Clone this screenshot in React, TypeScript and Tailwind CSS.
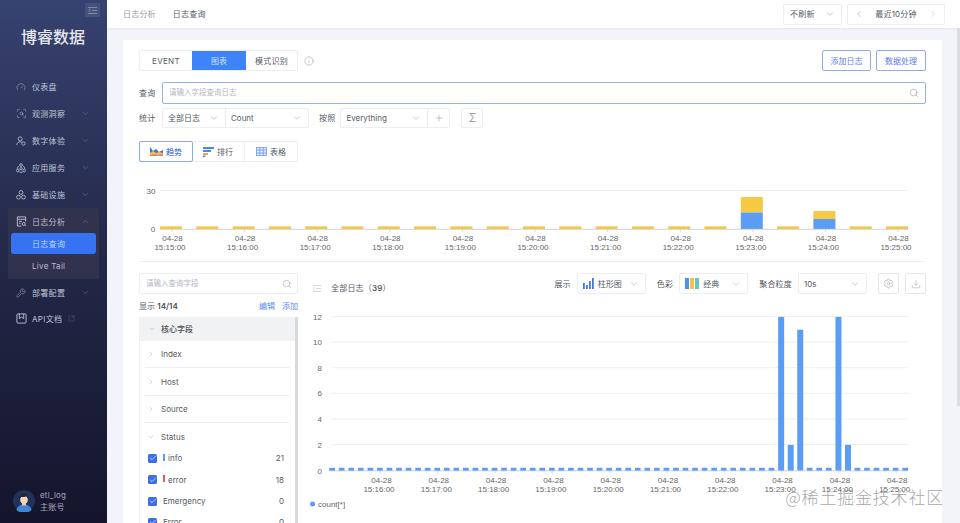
import { ChevronDown, ChevronLeft, ChevronRight, ChevronUp, Search, Info, Plus, Settings, Download, Gauge, ScanSearch, Wrench, SquareArrowOutUpRight, Check } from "lucide-react";

const FONT = { fontFamily: '"Inter", "Noto Sans CJK SC", sans-serif' };
const BLUE = "#5b9cf5";
const YELLOW = "#f6c944";

const topHours = ["15:15:00", "15:16:00", "15:17:00", "15:18:00", "15:19:00", "15:20:00", "15:21:00", "15:22:00", "15:23:00", "15:24:00", "15:25:00"];
const bottomHours = topHours.slice(1);
const spikes: Record<number, number> = { 47: 12, 48: 2, 49: 11, 53: 12, 54: 2 };

function UsersIcon() {
  return (
    <svg width="10" height="10" viewBox="0 0 12 12" fill="none" stroke="currentColor" strokeWidth="1">
      <circle cx="5" cy="3.4" r="2.4" />
      <path d="M1 11c0-2.6 1.6-4 4-4 1 0 1.8.2 2.4.7" />
      <circle cx="9" cy="9" r="2" />
    </svg>
  );
}

function NetworkIcon() {
  return (
    <svg width="10" height="10" viewBox="0 0 12 12" fill="none" stroke="currentColor" strokeWidth="1">
      <circle cx="6" cy="2.4" r="1.6" />
      <circle cx="2.2" cy="9" r="1.6" />
      <circle cx="9.8" cy="9" r="1.6" />
      <circle cx="6" cy="6.8" r="1.4" />
      <path d="M3.6 3.4A5 5 0 0 0 1.4 7M8.4 3.4A5 5 0 0 1 10.6 7M4 10.8a5 5 0 0 0 4 0" />
    </svg>
  );
}

function ClusterIcon() {
  return (
    <svg width="10" height="10" viewBox="0 0 12 12" fill="none" stroke="currentColor" strokeWidth="1">
      <circle cx="6" cy="3" r="2.3" />
      <circle cx="3" cy="8.6" r="2.3" />
      <circle cx="9" cy="8.6" r="2.3" />
    </svg>
  );
}

function LogIcon() {
  return (
    <svg width="11" height="11" viewBox="0 0 12 12" fill="none" stroke="currentColor" strokeWidth="1">
      <path d="M6 11H1.5V1h9v5" />
      <path d="M1.5 3.6h9M3.4 6h3M3.4 8h1.6" />
      <circle cx="8.4" cy="8.6" r="1.6" />
      <path d="M9.6 9.8l1.2 1.2" />
    </svg>
  );
}

function BookIcon() {
  return (
    <svg width="11" height="11" viewBox="0 0 12 12" fill="none" stroke="currentColor" strokeWidth="1">
      <path d="M2 1h8a1 1 0 0 1 1 1v8a1 1 0 0 1-1 1H2a1 1 0 0 1-1-1V2a1 1 0 0 1 1-1z" />
      <path d="M3.6 1v5l2.4-1.4L8.4 6V1" />
    </svg>
  );
}

function Avatar() {
  return (
    <svg width="22" height="22" viewBox="0 0 22 22">
      <circle cx="11" cy="11" r="11" fill="#22305a" />
      <path d="M3.5 20c1-4 4-5.500 7.500-5.500s6.500 1.500 7.500 5.500a11 11 0 0 1-15 0z" fill="#3f86d6" />
      <rect x="9" y="11" width="4" height="4.500" fill="#e8c4a4" />
      <ellipse cx="11" cy="9.500" rx="3.800" ry="4.300" fill="#f3d6b8" />
      <path d="M6.800 9c-.4-4 2-5.500 4.400-5.500S15.600 5 15.200 9c-.8-1.600-1.600-2.300-2.200-2.600-1.600.8-4.200.8-4.800.6-.6.6-1 1.200-1.400 2z" fill="#27262b" />
    </svg>
  );
}

function NavItem({ icon, label, chevron, external }: { icon: React.ReactNode; label: string; chevron?: "down" | "up"; external?: boolean }) {
  return (
    <div className="flex h-[27px] items-center pl-[16px] pr-[17px] text-[#bfc3d4]">
      <span className="flex w-[16px] shrink-0 items-center">{icon}</span>
      <span className="text-[8px] tracking-[0.3px] whitespace-nowrap">{label}</span>
      {external && <SquareArrowOutUpRight size={7} strokeWidth={1} className="ml-[6px] text-[#7d82a0]" />}
      {chevron === "down" && <ChevronDown size={9} strokeWidth={1.2} className="ml-auto text-[#7d82a0]" />}
      {chevron === "up" && <ChevronUp size={9} strokeWidth={1.2} className="ml-auto text-[#7d82a0]" />}
    </div>
  );
}

function Sidebar() {
  return (
    <aside className="relative flex h-full w-[107px] shrink-0 flex-col bg-gradient-to-b from-[#364270] via-[#232848] to-[#14152c]">
      <div className="absolute top-[3px] left-[85px] flex h-[14px] w-[15px] items-center justify-center rounded-[1px] bg-[#47527c]">
        <svg width="9" height="7" viewBox="0 0 9 7" stroke="#98a0bd" strokeWidth="0.7">
          <path d="M0 .5h9M4 3.500h5M0 6.500h9M2.500 2.300L.8 3.500l1.700 1.200" fill="none" />
        </svg>
      </div>
      <div className="mt-[26px] pl-[21px] text-[16px] leading-[22px] font-medium text-[#e6e8ef]">博睿数据</div>
      <nav className="mt-[25px] flex flex-col">
        <NavItem icon={<Gauge size={10} strokeWidth={1.1} />} label="仪表盘" />
        <NavItem icon={<ScanSearch size={11} strokeWidth={1.1} />} label="观测洞察" chevron="down" />
        <NavItem icon={<UsersIcon />} label="数字体验" chevron="down" />
        <NavItem icon={<NetworkIcon />} label="应用服务" chevron="down" />
        <NavItem icon={<ClusterIcon />} label="基础设施" chevron="down" />
        <div className="mx-[8px] flex h-[71px] flex-col bg-[#30324e]">
          <div className="-mx-[8px]">
            <NavItem icon={<LogIcon />} label="日志分析" chevron="up" />
          </div>
          <div className="mx-[3px] -mt-[2px] flex h-[21px] items-center rounded-[3px] bg-[#3673f2] pl-[21px] text-[8px] tracking-[0.3px] text-[#bcd2fb]">日志查询</div>
          <div className="flex h-[23px] items-center pl-[24px] text-[8px] tracking-[0.3px] text-[#b9bdcf]">Live Tail</div>
        </div>
        <NavItem icon={<Wrench size={10} strokeWidth={1.1} />} label="部署配置" chevron="down" />
        <div className="-mt-[1px]">
          <NavItem icon={<BookIcon />} label="API文档" external />
        </div>
      </nav>
      <div className="mt-auto mb-[10px] flex items-center gap-[5px] pl-[13px]">
        <Avatar />
        <div className="flex flex-col text-[8px] leading-[12px] tracking-[0.2px] text-[#a4a8bd]">
          <span>etl_log</span>
          <span>主账号</span>
        </div>
      </div>
    </aside>
  );
}

function Select({ label, width, icon, className = "" }: { label: string; width: string; icon?: React.ReactNode; className?: string }) {
  return (
    <div className={`flex h-full items-center justify-between border-[#e8eaee] pr-[6px] pl-[5px] text-[8px] text-[#555a64] ${width} ${className}`}>
      <span className="flex items-center gap-[4px] whitespace-nowrap">
        {icon}
        {label}
      </span>
      <ChevronDown size={10} strokeWidth={1.1} className="text-[#8b8f97]" />
    </div>
  );
}

function TrendIcon() {
  return (
    <svg width="13" height="9" viewBox="0 0 13 9">
      <path d="M0 0v9h13V3L9 5 6 2 3 4z" fill="#3f6fd8" />
      <path d="M0 6l3-2 3 2 3-1 4 1v3H0z" fill="#f2c04f" />
      <path d="M0 8l4-1 4 1 5-1v2H0z" fill="#e77e66" />
    </svg>
  );
}

function RankIcon() {
  return (
    <svg width="11" height="10" viewBox="0 0 11 10">
      <rect x="0" y="0" width="11" height="2" fill="#4a86ee" />
      <rect x="0" y="3" width="8" height="2" fill="#4a86ee" />
      <rect x="0" y="6" width="5" height="2" fill="#f0a14a" />
      <rect x="0" y="8.500" width="2.500" height="1.500" fill="#4a86ee" />
    </svg>
  );
}

function TableIcon() {
  return (
    <svg width="11" height="9" viewBox="0 0 11 9" fill="none" stroke="#6f9be8" strokeWidth="0.8">
      <rect x="0.400" y="0.400" width="10.200" height="8.200" fill="#e4ecfa" />
      <path d="M0 3h11M0 6h11M3.800 0v9M7.300 0v9" />
    </svg>
  );
}

function BarsIcon() {
  return (
    <svg width="11" height="11" viewBox="0 0 11 11" fill="#3f78e6">
      <rect x="0" y="5" width="1.800" height="6" />
      <rect x="3" y="7" width="1.800" height="4" />
      <rect x="6" y="3" width="1.800" height="8" />
      <rect x="9" y="0" width="1.800" height="11" />
    </svg>
  );
}

function PaletteIcon() {
  return (
    <svg width="14" height="11" viewBox="0 0 14 11">
      <rect x="0" y="0" width="4" height="11" fill="#4f8fee" />
      <rect x="5" y="0" width="4" height="11" fill="#f3c244" />
      <rect x="10" y="0" width="4" height="11" fill="#62c8c4" />
    </svg>
  );
}

function TopChart() {
  return (
    <svg viewBox="139 180 787 78" className="mt-[18px] block h-[78px] w-[787px]" style={{ fontFamily: '"Liberation Sans", sans-serif' }}>
      <line x1="160" y1="190.500" x2="908" y2="190.500" stroke="#f0f0f2" />
      <text x="151" y="193.500" textAnchor="middle" fontSize="8" fill="#666">30</text>
      <text x="153" y="232" textAnchor="middle" fontSize="8" fill="#666">0</text>
      {Array.from({ length: 21 }, (_, i) => {
        const x = 160 + i * 36.3;
        if (i === 16)
          return (
            <g key={i}>
              <rect x={x} y="197" width="22" height="15.500" fill={YELLOW} />
              <rect x={x} y="212.500" width="22" height="16.500" fill={BLUE} />
            </g>
          );
        if (i === 18)
          return (
            <g key={i}>
              <rect x={x} y="211" width="22" height="8" fill={YELLOW} />
              <rect x={x} y="219" width="22" height="10" fill={BLUE} />
            </g>
          );
        return <rect key={i} x={x} y="226.300" width="22" height="2.700" fill={YELLOW} />;
      })}
      <line x1="160" y1="229.300" x2="908" y2="229.300" stroke="#c4c6ca" strokeWidth="0.8" />
      {topHours.map((h, i) => (
        <g key={h} fontSize="8" fill="#666" textAnchor="middle">
          <line x1={172 + i * 72.6} y1="229.500" x2={172 + i * 72.6} y2="232" stroke="#c4c6ca" strokeWidth="0.6" />
          <text x={172.500 + i * 72.6} y="241">04-28</text>
          <text x={170 + i * 72.6} y="250">{h}</text>
        </g>
      ))}
    </svg>
  );
}

function BottomChart() {
  return (
    <svg viewBox="300 305 626 218" className="block h-[218px] w-[626px]" style={{ fontFamily: '"Liberation Sans", sans-serif' }}>
      {[12, 10, 8, 6, 4, 2].map((v, i) => (
        <g key={v}>
          <line x1="331" y1={316.500 + i * 25.6} x2="908" y2={316.500 + i * 25.6} stroke="#f0f0f2" />
          <text x="322" y={319.500 + i * 25.6} textAnchor="end" fontSize="8" fill="#666">{v}</text>
        </g>
      ))}
      <text x="322" y="473.500" textAnchor="end" fontSize="8" fill="#666">0</text>
      <line x1="329" y1="470.800" x2="908" y2="470.800" stroke="#c4c6ca" strokeWidth="0.8" />
      {Array.from({ length: 61 }, (_, i) => {
        const x = 329.300 + i * 9.55;
        const v = spikes[i];
        if (v) return <rect key={i} x={x} y={470.500 - v * 12.8} width="6" height={v * 12.8} fill={BLUE} />;
        return <rect key={i} x={x} y="467.800" width="5.700" height="2.800" fill={BLUE} />;
      })}
      {bottomHours.map((h, i) => (
        <g key={h} fontSize="8" fill="#666" textAnchor="middle">
          <line x1={380.500 + i * 57.3} y1="471" x2={380.500 + i * 57.3} y2="473.500" stroke="#c4c6ca" strokeWidth="0.6" />
          <text x={381.500 + i * 57.3} y="483">04-28</text>
          <text x={379 + i * 57.3} y="491.500">{h}</text>
        </g>
      ))}
      <circle cx="312.500" cy="504" r="2.500" fill={BLUE} />
      <text x="318" y="506.500" fontSize="8" fill="#666">count[*]</text>
    </svg>
  );
}

function FieldRow({ label, open }: { label: string; open?: boolean }) {
  return (
    <div className={`mx-[5px] flex h-[27.400px] items-center pl-[2px] text-[8px] text-[#555a64] ${open ? "-mb-[3px]" : "border-b border-[#eeeff2]"}`}>
      {open ? <ChevronDown size={8} strokeWidth={1.1} className="mr-[6px] text-[#8b8f97]" /> : <ChevronRight size={8} strokeWidth={1.1} className="mr-[6px] text-[#8b8f97]" />}
      {label}
    </div>
  );
}

function CheckRow({ label, count, tick }: { label: string; count: number; tick?: string }) {
  return (
    <div className="mx-[3px] flex h-[21.400px] items-center pr-[8px] pl-[5px] text-[8px] text-[#555a64]">
      <span className="mr-[6px] flex h-[9px] w-[9px] items-center justify-center rounded-[1.500px] bg-[#3a6fe8]">
        <Check size={8} strokeWidth={2} className="text-white" />
      </span>
      {tick && <span className={`mr-[3px] -mt-[2px] h-[7px] w-[2px] ${tick}`} />}
      <span>{label}</span>
      <span className="ml-auto">{count}</span>
    </div>
  );
}

function FieldPanel() {
  return (
    <div className="w-[159px] shrink-0">
      <div className="flex h-[21px] items-center justify-between rounded-[2px] border border-[#eceef1] pr-[5px] pl-[6px] text-[7.500px] text-[#b5b8bf]">
        请输入查询字段
        <Search size={10} strokeWidth={1.1} className="text-[#888c93]" />
      </div>
      <div className="mt-[5px] flex h-[13px] items-center justify-between text-[8px] text-[#555a64]">
        <span>
          显示 <b className="font-semibold text-[#4a4e57]">14/14</b>
        </span>
        <span className="flex gap-[7px] text-[#5b8def]">
          <span>编辑</span>
          <span>添加</span>
        </span>
      </div>
      <div className="relative mt-[5px] border-l border-[#eceef1] pr-[3px]">
        <div className="flex h-[24px] items-center bg-[#f1f2f3] pl-[8px] text-[8px] font-medium text-[#4a4e57]">
          <ChevronDown size={8} strokeWidth={1.1} className="mr-[5px] text-[#8b8f97]" />
          核心字段
        </div>
        <FieldRow label="Index" />
        <FieldRow label="Host" />
        <FieldRow label="Source" />
        <FieldRow label="Status" open />
        <CheckRow label="info" count={21} tick="bg-[#5b9cf5]" />
        <CheckRow label="error" count={18} tick="bg-[#ea5a5a]" />
        <CheckRow label="Emergency" count={0} />
        <CheckRow label="Error" count={0} />
        <div className="absolute top-0 right-0 h-[210px] w-[3px] bg-[#d9dadd]" />
      </div>
    </div>
  );
}

function ChartArea() {
  return (
    <div className="ml-[2px] flex-1">
      <div className="flex h-[21px] items-center text-[8px] text-[#555a64]">
        <svg className="mt-[9px] ml-[13px]" width="8" height="7" viewBox="0 0 8 7" stroke="#c4c6ca" strokeWidth="0.7" fill="none">
          <path d="M0 .5h8M3 3.500h5M0 6.500h8M1.800 2.300L.4 3.500l1.400 1.200" />
        </svg>
        <span className="mt-[9px] ml-[10px] tracking-[0.2px]">
          全部日志（<b className="font-semibold">39</b>）
        </span>
        <span className="ml-auto tracking-[0.2px]">展示</span>
        <div className="ml-[6px] h-full rounded-[2px] border border-[#eceef1]">
          <Select label="柱形图" width="w-[67px]" icon={<BarsIcon />} />
        </div>
        <span className="ml-[11px] tracking-[0.2px]">色彩</span>
        <div className="ml-[6px] h-full rounded-[2px] border border-[#eceef1]">
          <Select label="经典" width="w-[67px]" icon={<PaletteIcon />} />
        </div>
        <span className="ml-[11px] tracking-[0.2px]">聚合粒度</span>
        <div className="ml-[6px] h-full rounded-[2px] border border-[#eceef1]">
          <Select label="10s" width="w-[67px]" />
        </div>
        <div className="ml-[11px] flex h-full w-[21px] items-center justify-center rounded-[2px] border border-[#e4e6ea] text-[#8b8f97]">
          <Settings size={11} strokeWidth={1} />
        </div>
        <div className="ml-[6px] flex h-full w-[21px] items-center justify-center rounded-[2px] border border-[#e4e6ea] text-[#8b8f97]">
          <Download size={10} strokeWidth={1} />
        </div>
      </div>
      <div className="mt-[11px]">
        <BottomChart />
      </div>
    </div>
  );
}

export default function App() {
  return (
    <div className="relative flex h-[523px] w-[960px] overflow-hidden bg-[#f2f4f9]" style={FONT}>
      <Sidebar />
      <main className="flex min-w-0 flex-1 flex-col">
        <header className="flex h-[28px] shrink-0 items-center bg-white pr-[15px] pl-[16px] text-[8px] tracking-[0.2px] shadow-[0_1px_2px_rgba(0,0,0,0.05)]">
          <span className="text-[#9a9ea6]">日志分析</span>
          <span className="ml-[17px] text-[#555a64]">日志查询</span>
          <div className="ml-auto flex h-[21px] w-[59px] items-center justify-between rounded-[2px] border border-[#eceef1] pr-[6px] pl-[6px] text-[#555a64]">
            不刷新
            <ChevronDown size={10} strokeWidth={1.1} className="text-[#8b8f97]" />
          </div>
          <div className="ml-[5px] flex h-[21px] w-[98px] items-center justify-between rounded-[2px] border border-[#eceef1] px-[6px] text-[#555a64]">
            <ChevronLeft size={10} strokeWidth={1.1} className="text-[#8b8f97]" />
            最近10分钟
            <ChevronRight size={10} strokeWidth={1.1} className="text-[#b5b8bf]" />
          </div>
        </header>
        <div className="min-h-0 flex-1 pt-[12px] pr-[18px] pl-[16px]">
          <section className="h-[600px] bg-white pt-[10px] pr-[16px] pl-[16px]">
            <div className="flex h-[21px] items-center">
              <div className="flex h-full rounded-[2px] border border-[#eceef1] text-[8px] text-[#555a64]">
                <span className="flex w-[52px] items-center justify-center tracking-[0.3px]">EVENT</span>
                <span className="flex w-[54px] items-center justify-center bg-[#3f83f8] text-[#cfe0fd]">图表</span>
                <span className="flex w-[51px] items-center justify-center tracking-[0.3px]">模式识别</span>
              </div>
              <Info size={10} strokeWidth={1} className="ml-[6px] text-[#777b83]" />
              <button className="ml-auto flex h-full w-[49px] items-center justify-center rounded-[2px] border border-[#8fabef] text-[8px] text-[#5b80e8]">添加日志</button>
              <button className="ml-[5px] flex h-full w-[50px] items-center justify-center rounded-[2px] border border-[#8fabef] text-[8px] text-[#5b80e8]">数据处理</button>
            </div>
            <div className="mt-[11px] flex h-[22px] items-center">
              <span className="w-[23px] shrink-0 text-[8px] tracking-[0.2px] text-[#555a64]">查询</span>
              <div className="flex h-full flex-1 items-center justify-between rounded-[2px] border border-[#93b2f2] pr-[6px] pl-[6px] text-[7.500px] text-[#b5b8bf]">
                请输入字段查询日志
                <Search size={10} strokeWidth={1.1} className="text-[#777b83]" />
              </div>
            </div>
            <div className="mt-[4px] flex h-[20px] items-center">
              <span className="w-[23px] shrink-0 text-[8px] tracking-[0.2px] text-[#555a64]">统计</span>
              <div className="flex h-full rounded-[2px] border border-[#eceef1]">
                <Select label="全部日志" width="w-[63px]" className="border-r" />
                <Select label="Count" width="w-[82px]" />
              </div>
              <span className="ml-[10px] text-[8px] tracking-[0.2px] text-[#555a64]">按照</span>
              <div className="ml-[5px] flex h-full rounded-[2px] border border-[#eceef1]">
                <Select label="Everything" width="w-[87px]" className="border-r" />
                <span className="flex w-[21px] items-center justify-center text-[#777b83]">
                  <Plus size={10} strokeWidth={1} />
                </span>
              </div>
              <span className="ml-[11px] flex h-full w-[22px] items-center justify-center rounded-[2px] border border-[#eceef1] text-[11px] font-light text-[#8b8f97]">Σ</span>
            </div>
            <div className="mt-[13px] flex h-[21px] w-[159px] rounded-[2px] border border-[#eceef1] text-[8px] text-[#555a64]">
              <span className="-m-px flex w-[54px] items-center justify-center gap-[3px] rounded-[2px] border border-[#8fabef] font-medium text-[#4f76dc]">
                <TrendIcon />
                趋势
              </span>
              <span className="flex w-[53px] items-center justify-center gap-[3px] border-r border-[#eceef1]">
                <RankIcon />
                排行
              </span>
              <span className="flex flex-1 items-center justify-center gap-[3px]">
                <TableIcon />
                表格
              </span>
            </div>
            <TopChart />
            <div className="mt-[3px] border-t border-[#eeeff2]" />
            <div className="mt-[11px] flex">
              <FieldPanel />
              <ChartArea />
            </div>
          </section>
        </div>
      </main>
      <div className="absolute top-[28px] right-0 h-[378px] w-[3px] bg-[#dcdde2]" />
      <div className="absolute right-[16px] bottom-[16px] text-[17px] leading-[20px] font-light tracking-[0.8px] whitespace-nowrap text-[#8f8f8f]/80" style={{ fontFamily: '"Noto Sans CJK SC", sans-serif' }}>
        @稀土掘金技术社区
      </div>
    </div>
  );
}
